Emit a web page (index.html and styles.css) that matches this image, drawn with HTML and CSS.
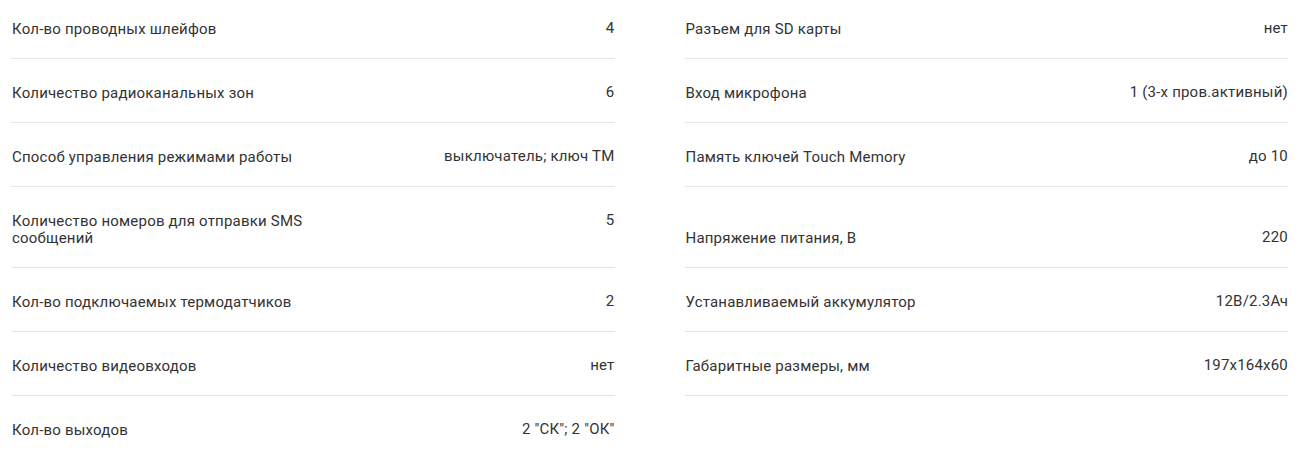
FILE: index.html
```html
<!DOCTYPE html>
<html lang="ru">
<head>
<meta charset="utf-8">
<title>Характеристики</title>
<link rel="stylesheet" href="styles.css">
</head>
<body>
<div class="specs">
  <div class="cell"><div class="item"><span class="label">Кол-во проводных шлейфов</span><span class="value">4</span></div></div>
  <div class="cell"><div class="item"><span class="label">Разъем для SD карты</span><span class="value">нет</span></div></div>

  <div class="cell"><div class="item"><span class="label">Количество радиоканальных зон</span><span class="value">6</span></div></div>
  <div class="cell"><div class="item"><span class="label">Вход микрофона</span><span class="value">1 (3-х пров.активный)</span></div></div>

  <div class="cell"><div class="item"><span class="label">Способ управления режимами работы</span><span class="value">выключатель; ключ ТМ</span></div></div>
  <div class="cell"><div class="item"><span class="label">Память ключей Touch Memory</span><span class="value">до 10</span></div></div>

  <div class="cell"><div class="item"><span class="label">Количество номеров для отправки SMS сообщений</span><span class="value">5</span></div></div>
  <div class="cell"><div class="item"><span class="label">Напряжение питания, В</span><span class="value">220</span></div></div>

  <div class="cell"><div class="item"><span class="label">Кол-во подключаемых термодатчиков</span><span class="value">2</span></div></div>
  <div class="cell"><div class="item"><span class="label">Устанавливаемый аккумулятор</span><span class="value">12В/2.3Ач</span></div></div>

  <div class="cell"><div class="item"><span class="label">Количество видеовходов</span><span class="value">нет</span></div></div>
  <div class="cell"><div class="item"><span class="label">Габаритные размеры, мм</span><span class="value">197x164x60</span></div></div>

  <div class="cell"><div class="item"><span class="label">Кол-во выходов</span><span class="value">2 "СК"; 2 "ОК"</span></div></div>
  <div class="cell empty"></div>
</div>
</body>
</html>
```

FILE: styles.css
```css
html, body {
  margin: 0;
  padding: 0;
  background: #ffffff;
}

body {
  font-family: Roboto, "Liberation Sans", Arial, sans-serif;
  font-size: 15px;
  letter-spacing: 0.2px;
  color: #333333;
}

.specs {
  display: grid;
  grid-template-columns: 1fr 1fr;
  column-gap: 70px;
  padding: 0 19px 0 11px;
  margin-top: -5px;
}

.cell {
  display: flex;
  align-items: flex-end;
  padding: 26px 0 20px;
  border-bottom: 1px solid #e6e6e6;
}

.cell.empty {
  border-bottom: none;
}

.item {
  flex: 1;
  display: flex;
  justify-content: space-between;
  align-items: flex-start;
  gap: 20px;
}

.label {
  line-height: 17px;
  max-width: 330px;
  padding-left: 1px;
}

.value {
  line-height: 15px;
  text-align: right;
  white-space: nowrap;
}
```
